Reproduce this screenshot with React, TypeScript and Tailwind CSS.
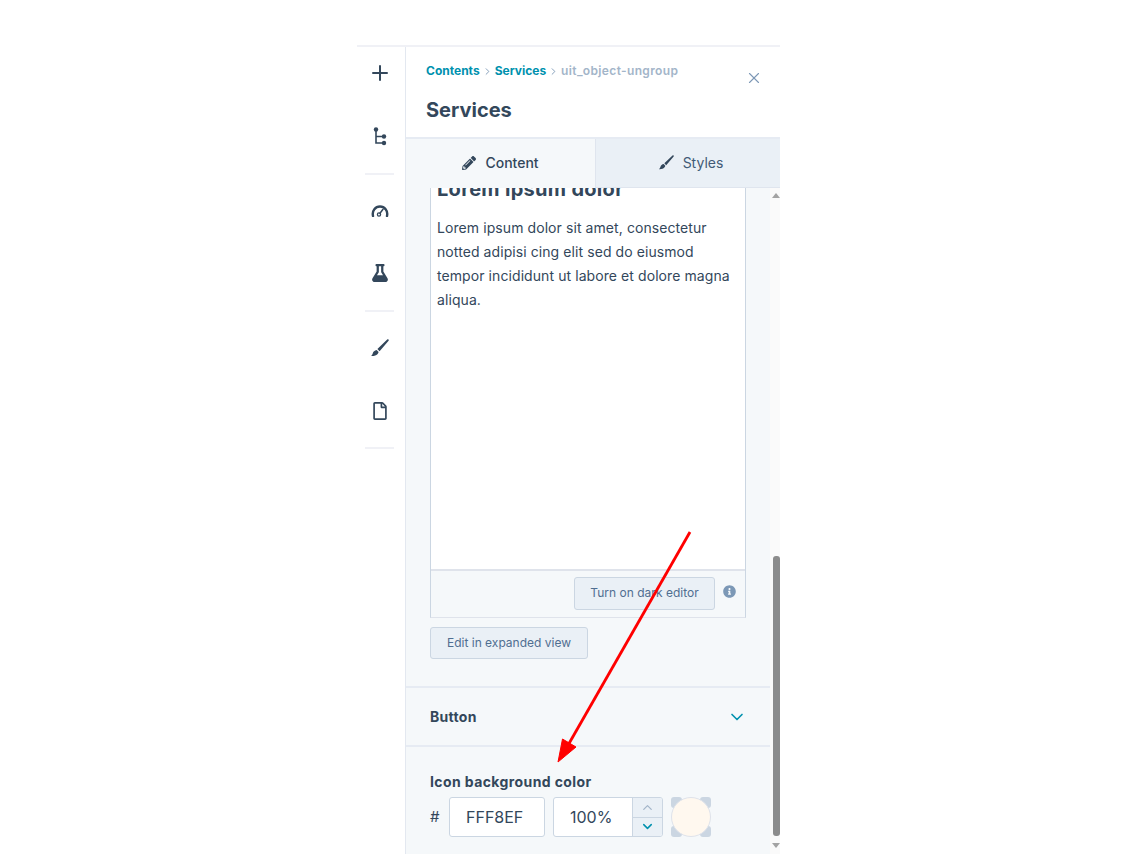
import React from 'react'
import { ChevronDown, ChevronRight, ChevronUp, Plus, X } from 'lucide-react'
import { FaFlask, FaInfoCircle, FaPencilAlt, FaRegFile } from 'react-icons/fa'

function TreeIcon() {
  return (
    <svg width="14" height="20" viewBox="0 0 14 20" fill="none">
      <path d="M3 3v13h8M3 9.5h8" stroke="#33475b" strokeWidth="1.6" />
      <circle cx="3" cy="2.5" r="2.2" fill="#33475b" />
      <circle cx="11" cy="9.5" r="2.2" fill="#33475b" />
      <circle cx="11" cy="16" r="2.2" fill="#33475b" />
    </svg>
  )
}

function GaugeIcon() {
  return (
    <svg width="18" height="12" viewBox="0 0 18 12" fill="none">
      <path d="M2 11C0.8 5.5 4.5 1.5 9 1.5s8.2 4 7 9.5" stroke="#33475b" strokeWidth="2.4" strokeLinecap="round" />
      <circle cx="8" cy="9.5" r="1.6" stroke="#33475b" strokeWidth="1.3" />
      <path d="M9 8.3l3-4" stroke="#33475b" strokeWidth="1.5" strokeLinecap="round" />
    </svg>
  )
}

function BrushIcon({ size, color }: { size: number; color: string }) {
  return (
    <svg width={size} height={size} viewBox="0 0 18 18" fill={color}>
      <path d="M17.5.5c.4.4.4.9.1 1.3L8.6 12.2 6.4 10 16.2.5c.4-.3.9-.4 1.3 0z" />
      <path d="M5.6 10.9l2 2c-.4 1.6-1.6 3-3.4 3.6-1.1.4-2.6.6-4.2.5 1-.8 1.5-1.7 1.8-2.8.4-1.7 1.8-3 3.8-3.3z" />
    </svg>
  )
}

function Divider() {
  return <div className="h-[2px] w-[29px] bg-[#f0f1f6]" />
}

function Sidebar() {
  return (
    <div className="flex w-[49px] shrink-0 flex-col items-center border-r border-[#e3e8f0] bg-white pr-[3px]">
      <div className="flex h-[52px] items-center justify-center">
        <Plus size={24} strokeWidth={2} className="text-[#33475b]" />
      </div>
      <div className="flex h-[74px] items-center justify-center pt-[2px]">
        <TreeIcon />
      </div>
      <Divider />
      <div className="flex h-[72px] items-center justify-center">
        <GaugeIcon />
      </div>
      <div className="flex h-[52px] items-center justify-center">
        <FaFlask size={18} className="text-[#33475b]" />
      </div>
      <div className="h-[11px]" />
      <Divider />
      <div className="flex h-[72px] items-center justify-center">
        <BrushIcon size={18} color="#33475b" />
      </div>
      <div className="flex h-[54px] items-center justify-center">
        <FaRegFile size={18} className="text-[#33475b]" />
      </div>
      <div className="h-[9px]" />
      <Divider />
    </div>
  )
}

function Header() {
  return (
    <div className="relative h-[90px] shrink-0 bg-white pl-[20px] pt-[15px]">
      <div className="flex items-center text-[12px] leading-[18px]">
        <span className="font-bold text-[#0091ae]">Contents</span>
        <ChevronRight size={11} className="mx-[2px] text-[#7c98b6]" />
        <span className="font-bold text-[#0091ae]">Services</span>
        <ChevronRight size={11} className="mx-[2px] text-[#7c98b6]" />
        <span className="font-semibold tracking-[0.35px] text-[#a3b5c9]">uit_object-ungroup</span>
      </div>
      <div className="mt-[16px] text-[20px] font-bold leading-[28px] text-[#33475b]">Services</div>
      <button className="absolute right-[17px] top-[22px] text-[#7c98b6]">
        <X size={18} strokeWidth={1.5} />
      </button>
    </div>
  )
}

function Tabs() {
  return (
    <div className="flex h-[51px] shrink-0 border-t-2 border-[#e6ebf3]">
      <div className="flex w-[189px] items-center justify-center gap-[9px] bg-[#f5f8fa] pb-[2px] text-[14px] font-medium text-[#33475b]">
        <FaPencilAlt size={14} />
        Content
      </div>
      <div className="flex flex-1 items-center justify-center gap-[9px] border-b border-l border-[#dfe5ee] bg-[#eaf0f6] pb-[1px] pl-[6px] text-[14px] text-[#425b76]">
        <BrushIcon size={15} color="#33475b" />
        Styles
      </div>
    </div>
  )
}

function Editor() {
  return (
    <div className="flex h-[430px] flex-col border border-t-0 border-[#cbd6e2] border-b-[#dfe3eb]">
      <div className="flex-1 overflow-hidden bg-white px-[6px]">
        <div className="-mt-[11px] text-[20px] font-bold leading-[24px] tracking-[0.3px] text-[#33475b]">Lorem ipsum dolor</div>
        <p className="mt-[15px] text-[14px] leading-[24px] tracking-[0.08px] text-[#33475b]">
          Lorem ipsum dolor sit amet, consectetur
          <br />
          notted adipisi cing elit sed do eiusmod
          <br />
          tempor incididunt ut labore et dolore magna
          <br />
          aliqua.
        </p>
      </div>
      <div className="flex h-[48px] shrink-0 items-center border-t-2 border-[#dfe3eb] pb-[2px] pl-[143px]">
        <button className="flex h-[33px] w-[141px] items-center justify-center rounded-[3px] border border-[#cbd6e2] bg-[#eaf0f6] text-[12px] text-[#506e91]">
          Turn on dark editor
        </button>
        <FaInfoCircle size={13} className="ml-[8px] -mt-[4px] text-[#7c98b6]" />
      </div>
    </div>
  )
}

function ColorField() {
  return (
    <div className="mt-[6px] flex items-center">
      <span className="w-[19px] text-[15px] text-[#33475b]">#</span>
      <div className="flex h-[40px] w-[96px] items-center rounded-[3px] border border-[#cbd6e2] bg-white pl-[16px] text-[16px] text-[#33475b]">
        FFF8EF
      </div>
      <div className="ml-[8px] flex h-[40px] w-[110px] overflow-hidden rounded-[3px] border border-[#cbd6e2] bg-white">
        <div className="flex flex-1 items-center pl-[16px] text-[16px] text-[#33475b]">100%</div>
        <div className="flex w-[30px] flex-col border-l border-[#cbd6e2] bg-[#eaf0f6]">
          <div className="flex flex-1 items-center justify-center border-b border-[#cbd6e2] text-[#a3b5c9]">
            <ChevronUp size={15} strokeWidth={2} />
          </div>
          <div className="flex flex-1 items-center justify-center text-[#0091ae]">
            <ChevronDown size={15} strokeWidth={2.4} />
          </div>
        </div>
      </div>
      <div className="relative ml-[8px] h-[40px] w-[40px]">
        <div className="absolute left-0 top-0 h-[11px] w-[11px] rounded-[3px] bg-[#cbd6e2]" />
        <div className="absolute right-0 top-0 h-[11px] w-[11px] rounded-[3px] bg-[#cbd6e2]" />
        <div className="absolute bottom-0 left-0 h-[11px] w-[11px] rounded-[3px] bg-[#cbd6e2]" />
        <div className="absolute bottom-0 right-0 h-[11px] w-[11px] rounded-[3px] bg-[#cbd6e2]" />
        <div className="absolute inset-0 rounded-full border border-[#dfe3eb] bg-[#fff8ef]" />
      </div>
    </div>
  )
}

function Scrollbar() {
  return (
    <div className="relative w-[10px] shrink-0 bg-[#fafafa]">
      <div className="absolute left-[2px] top-[5px] h-0 w-0 border-x-[4px] border-b-[5px] border-x-transparent border-b-[#a3a3a3]" />
      <div className="absolute left-[3px] right-0 top-[368px] h-[280px] rounded-[3px] bg-[#8c8c8c]" />
      <div className="absolute bottom-[6px] left-[2px] h-0 w-0 border-x-[4px] border-t-[5px] border-x-transparent border-t-[#a3a3a3]" />
    </div>
  )
}

function Content() {
  return (
    <div className="flex min-h-0 flex-1 bg-[#f5f8fa]">
      <div className="min-w-0 flex-1 overflow-hidden">
        <div className="pl-[24px] pr-[24px]">
          <Editor />
          <button className="mt-[9px] flex h-[32px] w-[158px] items-center justify-center rounded-[3px] border border-[#cbd6e2] bg-[#eaf0f6] text-[12px] text-[#506e91]">
            Edit in expanded view
          </button>
        </div>
        <div className="mt-[27px] flex h-[61px] items-center justify-between border-y-2 border-[#e6ebf3] pl-[24px] pr-[23px]">
          <span className="text-[14px] font-bold tracking-[0.3px] text-[#33475b]">Button</span>
          <ChevronDown size={20} strokeWidth={2} className="text-[#0091ae]" />
        </div>
        <div className="pl-[24px] pt-[26px]">
          <div className="text-[14px] font-bold leading-[18px] tracking-[0.4px] text-[#33475b]">Icon background color</div>
          <ColorField />
        </div>
      </div>
      <Scrollbar />
    </div>
  )
}

export default function App() {
  return (
    <div className="relative h-[854px] overflow-hidden bg-white pt-[45px] font-['Inter','Lato',sans-serif]">
      <div className="ml-[357px] flex h-[809px] w-[423px] border-t-2 border-[#f0f1f6]">
        <Sidebar />
        <div className="flex min-w-0 flex-1 flex-col">
          <Header />
          <Tabs />
          <Content />
        </div>
      </div>
      {/* red annotation arrow */}
      <svg className="absolute left-[551px] top-[526px]" width="150" height="245" viewBox="0 0 150 245" fill="none">
        <path d="M139 6L16 221" stroke="#ff0000" strokeWidth="2.8" />
        <path d="M7 236L11.5 213L25 221Z" fill="#ff0000" stroke="#ff0000" strokeWidth="1" />
      </svg>
    </div>
  )
}
